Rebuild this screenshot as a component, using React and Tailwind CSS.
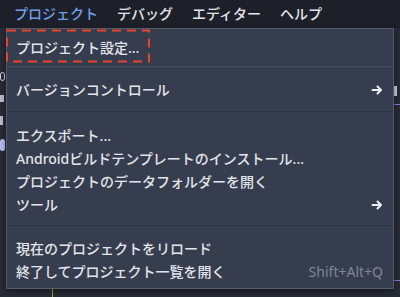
import React from "react";

const FONT = { fontFamily: '"Noto Sans", "Noto Sans CJK JP", sans-serif' };

const ArrowRight = () => (
  <svg width="12" height="12" viewBox="0 0 12 12" fill="none">
    <path d="M1.5 6H10M6.5 2.5L10 6L6.5 9.5" stroke="#eef0f4" strokeWidth="2" strokeLinecap="round" strokeLinejoin="round" />
  </svg>
);

const MenuItem = ({ label, shortcut, submenu }) => (
  <div className="flex h-[23px] items-center justify-between pl-[9px] pr-[10px]">
    <span className="text-[14px] font-medium leading-none text-[#e3e5ea]">{label}</span>
    {shortcut && <span className="text-[14px] leading-none text-[#7f8696]">{shortcut}</span>}
    {submenu && <ArrowRight />}
  </div>
);

const Separator = ({ className = "" }) => (
  <div className={`h-px bg-[#2c3241] ${className}`} />
);

const App = () => {
  const topMenus = ["デバッグ", "エディター", "ヘルプ"];

  return (
    <div className="relative flex h-[297px] w-[400px] flex-col overflow-hidden bg-[#272b35]" style={FONT}>
      {/* Menu bar */}
      <div className="flex h-[28px] shrink-0 items-center gap-[19px] bg-[#1d2029] pl-[14px]">
        <span className="text-[14px] font-medium leading-none text-[#6f9fec]">プロジェクト</span>
        {topMenus.map((m) => (
          <span key={m} className="text-[14px] font-medium leading-none text-[#e3e5ea]">{m}</span>
        ))}
      </div>

      {/* Editor behind the popup: left dock edge, viewport, right dock edge */}
      <div className="flex flex-1">
        <div className="flex w-[6px] flex-col gap-[14px] pt-[44px]">
          <div className="h-[9px] w-[5px] rounded-full border border-[#d8dae0]" />
          <div className="h-[7px] w-[4px] bg-[#b9bcc4]" />
          <div className="h-[9px] w-[3px] bg-[#b9bcc4]" />
          <div className="h-[12px] w-[5px] rounded-sm bg-[#b6bdf0]" />
        </div>
        <div className="flex-1" />
        <div className="flex w-[7px] flex-col pt-[58px]">
          <div className="h-[10px] w-[4px] bg-[#c9ccd4]" />
          <div className="mt-[8px] h-px w-[7px] bg-[#8a73d8]" />
          <div className="mt-[175px] h-px w-[7px] bg-[#8a73d8]" />
        </div>
      </div>
      <div className="absolute bottom-0 left-[52px] h-[8px] w-px bg-[#8fb03a]" />

      {/* Project popup menu */}
      <div className="absolute left-[6px] top-[28px] w-[388px] border border-[#555b69] bg-[#363d4f] pb-[5px] pt-[7px] shadow-[0_2px_6px_rgba(0,0,0,0.45)]">
        <MenuItem label="プロジェクト設定..." />
        <Separator className="mb-[11px] mt-[7px] bg-[#464d5e]" />
        <MenuItem label="バージョンコントロール" submenu />
        <Separator className="mb-[12px] mt-[10px]" />
        <MenuItem label="エクスポート..." />
        <MenuItem label="Androidビルドテンプレートのインストール..." />
        <MenuItem label="プロジェクトのデータフォルダーを開く" />
        <MenuItem label="ツール" submenu />
        <Separator className="mb-[11px] mt-[9px]" />
        <MenuItem label="現在のプロジェクトをリロード" />
        <MenuItem label="終了してプロジェクト一覧を開く" shortcut="Shift+Alt+Q" />

        {/* Highlight outline around the first item */}
        <svg className="pointer-events-none absolute left-[-1px] top-0" width="145" height="34" viewBox="0 0 145 34">
          <rect x="1" y="1.5" width="142" height="31" fill="none" stroke="#e8452b" strokeWidth="2" strokeDasharray="9 6" />
        </svg>
      </div>
    </div>
  );
};

export default App;
